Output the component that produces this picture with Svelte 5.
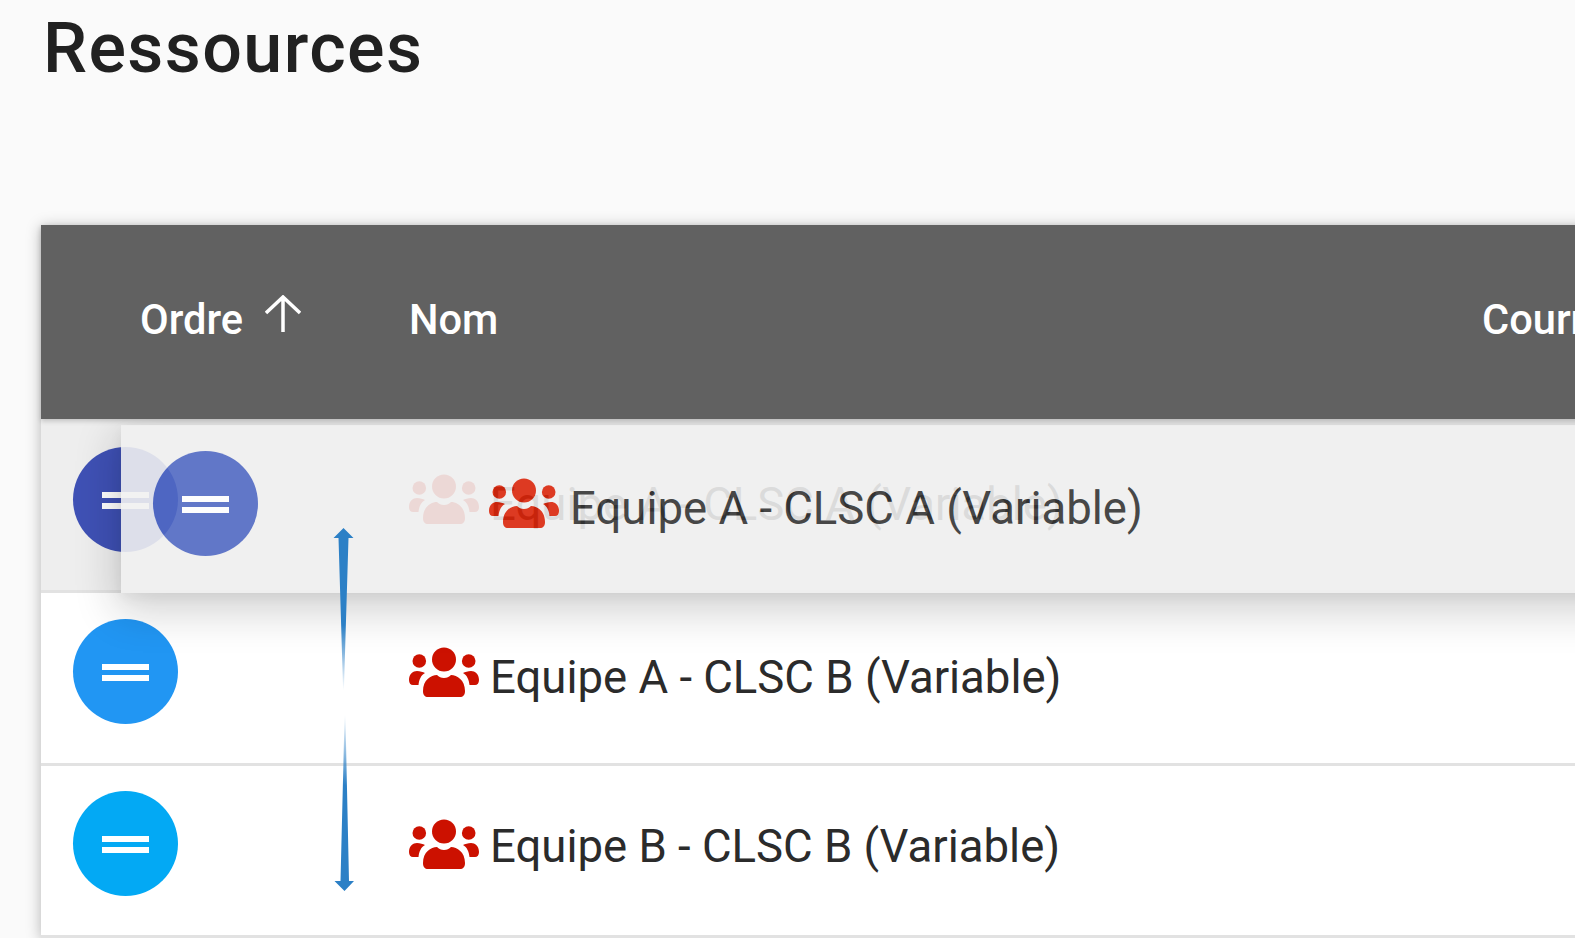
<script>
  const rows = [
    { cls: 'r1 placeholder', dot: 'indigo', name: 'Equipe A - CLSC A (Variable)' },
    { cls: 'r2', dot: 'blue', name: 'Equipe A - CLSC B (Variable)' },
    { cls: 'r3', dot: 'sky', name: 'Equipe B - CLSC B (Variable)' }
  ];
</script>

{#snippet users()}
  <svg class="users" viewBox="0 0 70 50" aria-hidden="true">
    <circle cx="35" cy="12.5" r="12" />
    <circle cx="10.3" cy="14" r="6.8" />
    <circle cx="59.7" cy="14" r="6.8" />
    <path d="M14 44C14 33 22 28 28 28C30 30 32 31 35 31C38 31 40 30 42 28C48 28 56 33 56 44C56 48 54 50 51 50L19 50C16 50 14 48 14 44Z" />
    <path d="M0 33C0 27 4 24 8 24C11 24 14 25 16 26C12 28 10 33 9.5 38L4 38C1.5 38 0 36 0 33Z" />
    <path d="M70 33C70 27 66 24 62 24C59 24 56 25 54 26C58 28 60 33 60.5 38L66 38C68.5 38 70 36 70 33Z" />
  </svg>
{/snippet}

{#snippet handle(color)}
  <div class="handle {color}"><span class="bar"></span><span class="bar"></span></div>
{/snippet}

<main class="page">
  <h1>Ressources</h1>
  <section class="table">
    <header class="head">
      <div class="h-order">
        <span>Ordre</span>
        <svg class="sort" viewBox="0 0 36 37" aria-hidden="true">
          <path d="M18 37V2M1 18L18 2L35 18" />
        </svg>
      </div>
      <div class="h-name">Nom</div>
      <div class="h-course">Courriel</div>
    </header>
    <div class="body">
      {#each rows as row}
        <div class="row {row.cls}">
          <div class="c-order">{@render handle(row.dot)}</div>
          <div class="c-name">{@render users()}<span class="label">{row.name}</span></div>
        </div>
      {/each}
      <div class="row drag">
        <div class="c-order">{@render handle('periwinkle')}</div>
        <div class="c-name">{@render users()}<span class="label">Equipe A - CLSC A (Variable)</span></div>
      </div>
    </div>
  </section>
  <svg class="move" viewBox="0 0 40 380" aria-hidden="true">
    <defs>
      <linearGradient id="up" x1="0" y1="0" x2="0" y2="1">
        <stop offset="0.6" stop-color="#2c80c6" />
        <stop offset="1" stop-color="#2c80c6" stop-opacity="0" />
      </linearGradient>
      <linearGradient id="down" x1="0" y1="0" x2="0" y2="1">
        <stop offset="0" stop-color="#2c80c6" stop-opacity="0" />
        <stop offset="0.4" stop-color="#2c80c6" />
      </linearGradient>
    </defs>
    <path fill="url(#up)" d="M19.5 0L29.5 10L24.5 10L19.9 162L19.1 162L14.5 10L9.5 10Z" />
    <path fill="url(#down)" d="M20.6 187L21.4 187L25 353L30 353L20.5 363L10.5 353L16.5 353Z" />
  </svg>
</main>

<style>
  :global(body) {
    margin: 0;
    background: #fafafa;
  }
  .page {
    position: relative;
    width: 1575px;
    height: 938px;
    overflow: hidden;
    font-family: Roboto, "Liberation Sans", sans-serif;
    color: #212121;
  }
  h1 {
    margin: 0;
    padding: 0 0 0 43px;
    height: 225px;
    box-sizing: border-box;
    font-size: 70px;
    font-weight: 500;
    line-height: 96px;
    letter-spacing: 1.4px;
  }
  .table {
    width: 1800px;
    margin-left: 41px;
    background: #fff;
    box-shadow: 0 2px 14px rgba(0, 0, 0, 0.28);
  }
  .head {
    position: relative;
    z-index: 2;
    display: flex;
    align-items: center;
    height: 194px;
    padding-bottom: 5px;
    box-sizing: border-box;
    background: #616161;
    color: #fff;
    font-size: 41.6px;
    font-weight: 500;
    box-shadow: 0 2px 5px rgba(0, 0, 0, 0.2);
  }
  .h-order {
    display: flex;
    align-items: center;
    gap: 22px;
    width: 368px;
    padding-left: 99px;
    box-sizing: border-box;
    flex: none;
  }
  .sort {
    width: 36px;
    height: 37px;
    margin-bottom: 12px;
    fill: none;
    stroke: #fff;
    stroke-width: 3.5;
    flex: none;
  }
  .h-name {
    width: 1073px;
    flex: none;
  }
  .body {
    position: relative;
  }
  .row {
    display: flex;
    align-items: flex-start;
    box-sizing: border-box;
    background: #fff;
    border-bottom: 3px solid #e2e2e2;
  }
  .r1 { height: 174px; padding-top: 28px; background: #eeeeee; }
  .r2 { height: 173px; padding-top: 26px; }
  .r3 { height: 172px; padding-top: 25px; }
  .c-order {
    width: 368px;
    padding-left: 32px;
    box-sizing: border-box;
    flex: none;
  }
  .c-name {
    display: flex;
    align-items: center;
    height: 110px;
    color: #2b2b2b;
  }
  .users {
    width: 70px;
    height: 50px;
    fill: #cc1100;
    margin: 0 11px 6px 0;
    flex: none;
  }
  .r2 .users,
  .r3 .users { margin-bottom: 4px; }
  .label {
    font-size: 45.5px;
    line-height: 50px;
    white-space: nowrap;
  }
  .r1 .label { margin-top: 6px; }
  .r2 .label { margin-top: 8px; }
  .r3 .label { margin-top: 2px; }
  .drag .label { margin-top: 6px; }
  .handle {
    width: 105px;
    height: 105px;
    border-radius: 50%;
    display: flex;
    flex-direction: column;
    align-items: center;
    justify-content: center;
    gap: 5px;
    padding-top: 2px;
    box-sizing: border-box;
  }
  .bar {
    width: 47px;
    height: 6px;
    background: #fff;
  }
  .indigo { background: #3f51b5; }
  .blue { background: #2196f3; }
  .sky { background: #03a9f4; }
  .periwinkle { background: #5069c4; }
  .drag {
    position: absolute;
    top: 6px;
    left: 80px;
    right: 0;
    height: 168px;
    padding-top: 26px;
    background: #f1f1f1;
    border-bottom: 0;
    opacity: 0.89;
    box-shadow:
      0 14px 40px 4px rgba(0, 0, 0, 0.2),
      0 4px 12px rgba(0, 0, 0, 0.06);
  }
  .drag .users {
    fill: #db2409;
  }
  .drag .c-name {
    color: #333;
  }
  .move {
    position: absolute;
    left: 324px;
    top: 528px;
    width: 40px;
    height: 380px;
  }
</style>
